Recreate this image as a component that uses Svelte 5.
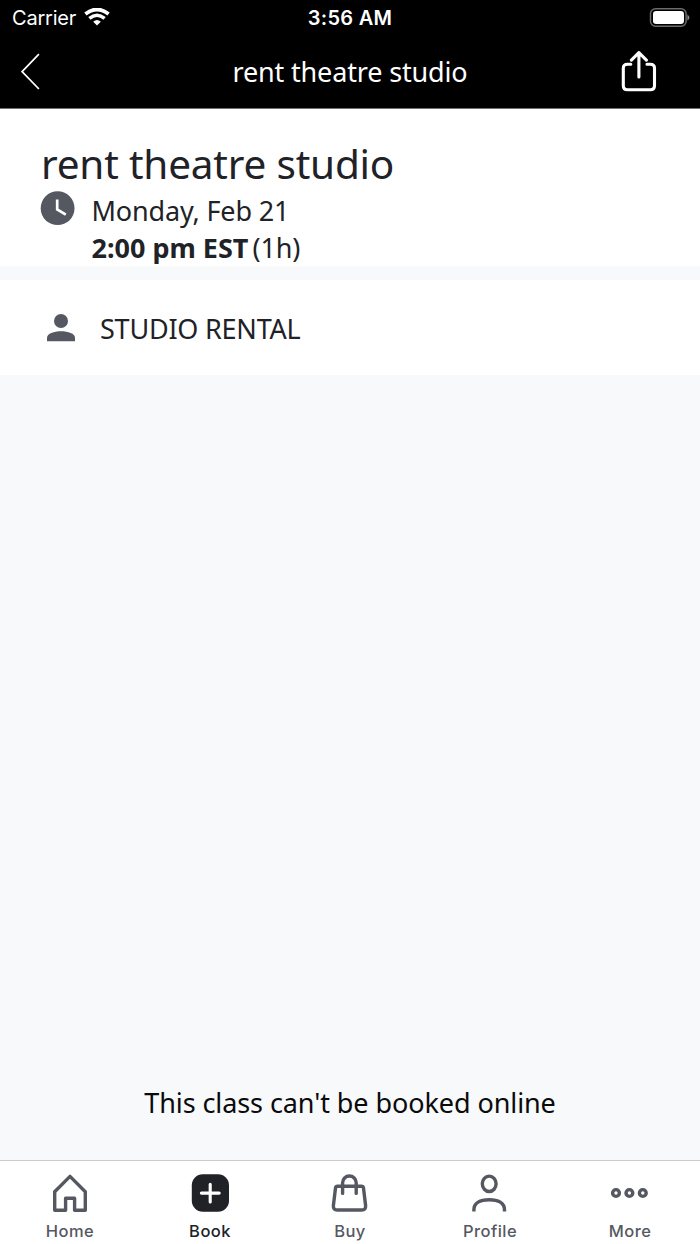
<script lang="ts">
  const title = 'rent theatre studio'

  const tabs = [
    { id: 'home', label: 'Home' },
    { id: 'book', label: 'Book' },
    { id: 'buy', label: 'Buy' },
    { id: 'profile', label: 'Profile' },
    { id: 'more', label: 'More' },
  ]

  let active = $state('book')
</script>

<div class="screen">
  <header class="top">
    <div class="status">
      <div class="carrier">
        <span>Carrier</span>
        <svg width="26" height="20" viewBox="0 0 26 20" fill="none" aria-hidden="true">
          <path d="M1.4 6Q13 -3 24.6 6" stroke="#fff" stroke-width="3.8" />
          <path d="M5.4 10.4Q13 4 20.6 10.4" stroke="#fff" stroke-width="3.5" />
          <path d="M9.2 13.8Q13 10.4 16.8 13.8L13 17.6Z" fill="#fff" />
        </svg>
      </div>
      <span class="time">3:56 AM</span>
      <svg class="battery" width="42" height="20" viewBox="0 0 42 20" aria-hidden="true">
        <rect x="2.5" y=".8" width="35.6" height="17.4" rx="5" fill="none" stroke="#6b6b6b" stroke-width="1.5" />
        <rect x="5" y="3" width="31" height="13" rx="3.2" fill="#fff" />
        <path d="M39.4 6.4Q41.4 7.6 41.4 9.5T39.4 12.6Z" fill="#888" />
      </svg>
    </div>
    <div class="nav">
      <button aria-label="Back">
        <svg width="20" height="38" viewBox="0 0 20 38" fill="none" aria-hidden="true">
          <path d="M17.9 1.2L1.1 18.6L17.9 36" stroke="#fff" stroke-width="1.7" />
        </svg>
      </button>
      <span class="nav-title">{title}</span>
      <button aria-label="Share">
        <svg width="36" height="42" viewBox="0 0 36 42" fill="none" stroke="#fff" stroke-width="3.1" stroke-linecap="round" stroke-linejoin="round" aria-hidden="true">
          <path d="M9.8 13.3H6.5Q2.3 13.3 2.3 17.3V34.8Q2.3 38.8 6.5 38.8H29.3Q33.5 38.8 33.5 34.8V17.3Q33.5 13.3 29.3 13.3H26" />
          <path d="M17.9 26V1.6M10.4 9.1L17.9 1.6L25.4 9.1" />
        </svg>
      </button>
    </div>
  </header>

  <section class="details">
    <h1>{title}</h1>
    <div class="when">
      <svg width="34" height="34" viewBox="0 0 34 34" aria-hidden="true">
        <circle cx="16.6" cy="16.2" r="16.9" fill="#555861" />
        <path d="M16.2 7.6V17.4L24.8 22.6" fill="none" stroke="#fff" stroke-width="2.7" />
      </svg>
      <div class="lines">
        <div class="date">Monday, Feb 21</div>
        <div class="hour"><b>2:00 pm EST</b><span>(1h)</span></div>
      </div>
    </div>
  </section>

  <section class="staff">
    <svg width="28" height="28" viewBox="0 0 28 28" fill="#555861" aria-hidden="true">
      <circle cx="14" cy="7" r="7" />
      <path d="M0 27.3V24C0 19.4 7 17.3 14 17.3S28 19.4 28 24V27.3Z" />
    </svg>
    <span>STUDIO RENTAL</span>
  </section>

  <main>
    <p>This class can't be booked online</p>
  </main>

  <nav class="tabs">
    {#each tabs as tab}
      <button class="tab" class:active={active === tab.id} onclick={() => (active = tab.id)}>
        <svg width="40" height="40" viewBox="0 0 40 40" fill="none" stroke="currentColor" stroke-width="3.4" aria-hidden="true">
          {#if tab.id === 'home'}
            <path d="M4.7 18.7L20 3.4L35.3 18.7V37.2H24.6V25.2H15.6V37.2H4.7Z" stroke-linejoin="round" />
          {:else if tab.id === 'book'}
            <rect x="1.8" y="1.2" width="37.2" height="37.6" rx="11" fill="currentColor" stroke="none" />
            <path d="M20.2 11.3V28.9M11.4 20.1H29.2" stroke="#fff" stroke-width="3.1" stroke-linecap="round" />
          {:else if tab.id === 'buy'}
            <path d="M7.6 13.2H31.4Q33.2 13.2 33.5 15L35.6 32.5Q36 37 31.8 37H7.2Q3 37 3.4 32.5L5.5 15Q5.8 13.2 7.6 13.2Z" />
            <path d="M12.6 20.4V9.8A6.8 6.8 0 0 1 26.2 9.8V20.4" stroke-linecap="round" />
          {:else if tab.id === 'profile'}
            <ellipse cx="19.2" cy="10.8" rx="6.9" ry="7.7" />
            <path d="M3.9 38.4V36.8C3.9 30 10 26.7 19.2 26.7S34.5 30 34.5 36.8V38.4" />
          {:else}
            <circle cx="6" cy="20" r="3.4" />
            <circle cx="19.4" cy="20" r="3.4" />
            <circle cx="32.8" cy="20" r="3.4" />
          {/if}
        </svg>
        <span>{tab.label}</span>
      </button>
    {/each}
  </nav>
</div>

<style>
  :global(body) {
    margin: 0;
  }

  .screen {
    display: flex;
    flex-direction: column;
    width: 700px;
    height: 1244px;
    overflow: hidden;
    background: #f7f9fb;
    color: #212227;
    font-family: 'Noto Sans', sans-serif;
    font-size: 27px;
    letter-spacing: -0.08px;
  }

  button {
    display: flex;
    padding: 0;
    border: none;
    background: none;
    cursor: pointer;
  }

  svg {
    display: block;
    flex-shrink: 0;
  }

  /* ── Status bar and title bar ── */
  .top {
    box-sizing: border-box;
    height: 109px;
    border-bottom: 1px solid #77706e;
    background: #000;
    color: #fff;
  }

  .status {
    display: grid;
    grid-template-columns: 1fr auto 1fr;
    align-items: center;
    height: 36px;
    padding: 0 10px 0 12px;
    font-family: Inter, sans-serif;
    font-size: 20px;
  }

  .carrier {
    display: flex;
    align-items: center;
    gap: 7.5px;
    letter-spacing: -0.2px;
  }

  .time {
    margin-right: 2px;
    font-weight: 600;
    letter-spacing: 0.3px;
  }

  .battery {
    justify-self: end;
  }

  .nav {
    display: grid;
    grid-template-columns: 36px 1fr 36px;
    align-items: center;
    height: 71px;
    padding: 0 43px 0 21px;
  }

  .nav-title {
    padding-left: 22px;
    text-align: center;
    letter-spacing: -0.15px;
  }

  /* ── Class details ── */
  .details {
    box-sizing: border-box;
    height: 157px;
    padding: 27px 40px 0 41px;
    background: #fff;
  }

  h1 {
    margin: 0;
    font-size: 40.5px;
    font-weight: 400;
    line-height: 56px;
    letter-spacing: -0.2px;
  }

  .when {
    display: flex;
    gap: 17px;
  }

  .when svg {
    overflow: visible;
  }

  .lines {
    margin-left: -0.5px;
    line-height: 37px;
    letter-spacing: -0.15px;
  }

  .hour {
    display: flex;
    gap: 4px;
  }

  .hour b {
    letter-spacing: 0;
  }

  .staff {
    display: flex;
    align-items: center;
    gap: 25px;
    height: 95px;
    margin-top: 14px;
    padding-left: 47px;
    background: #fff;
    letter-spacing: -0.22px;
  }

  .staff span {
    padding-top: 1px;
  }

  main {
    display: flex;
    flex: 1;
    align-items: flex-end;
    justify-content: center;
    color: #0b0b0c;
  }

  p {
    margin: 0 0 38px;
    line-height: 38px;
  }

  /* ── Tab bar ── */
  .tabs {
    display: grid;
    grid-template-columns: repeat(5, 1fr);
    box-sizing: border-box;
    height: 84px;
    padding-top: 12px;
    border-top: 1px solid #c9cbce;
    background: #fff;
  }

  .tab {
    flex-direction: column;
    align-items: center;
    gap: 7px;
    color: #555861;
    font: 450 16.5px/22px Inter, sans-serif;
    letter-spacing: 0.45px;
  }

  .tab.active {
    color: #212227;
  }
</style>
